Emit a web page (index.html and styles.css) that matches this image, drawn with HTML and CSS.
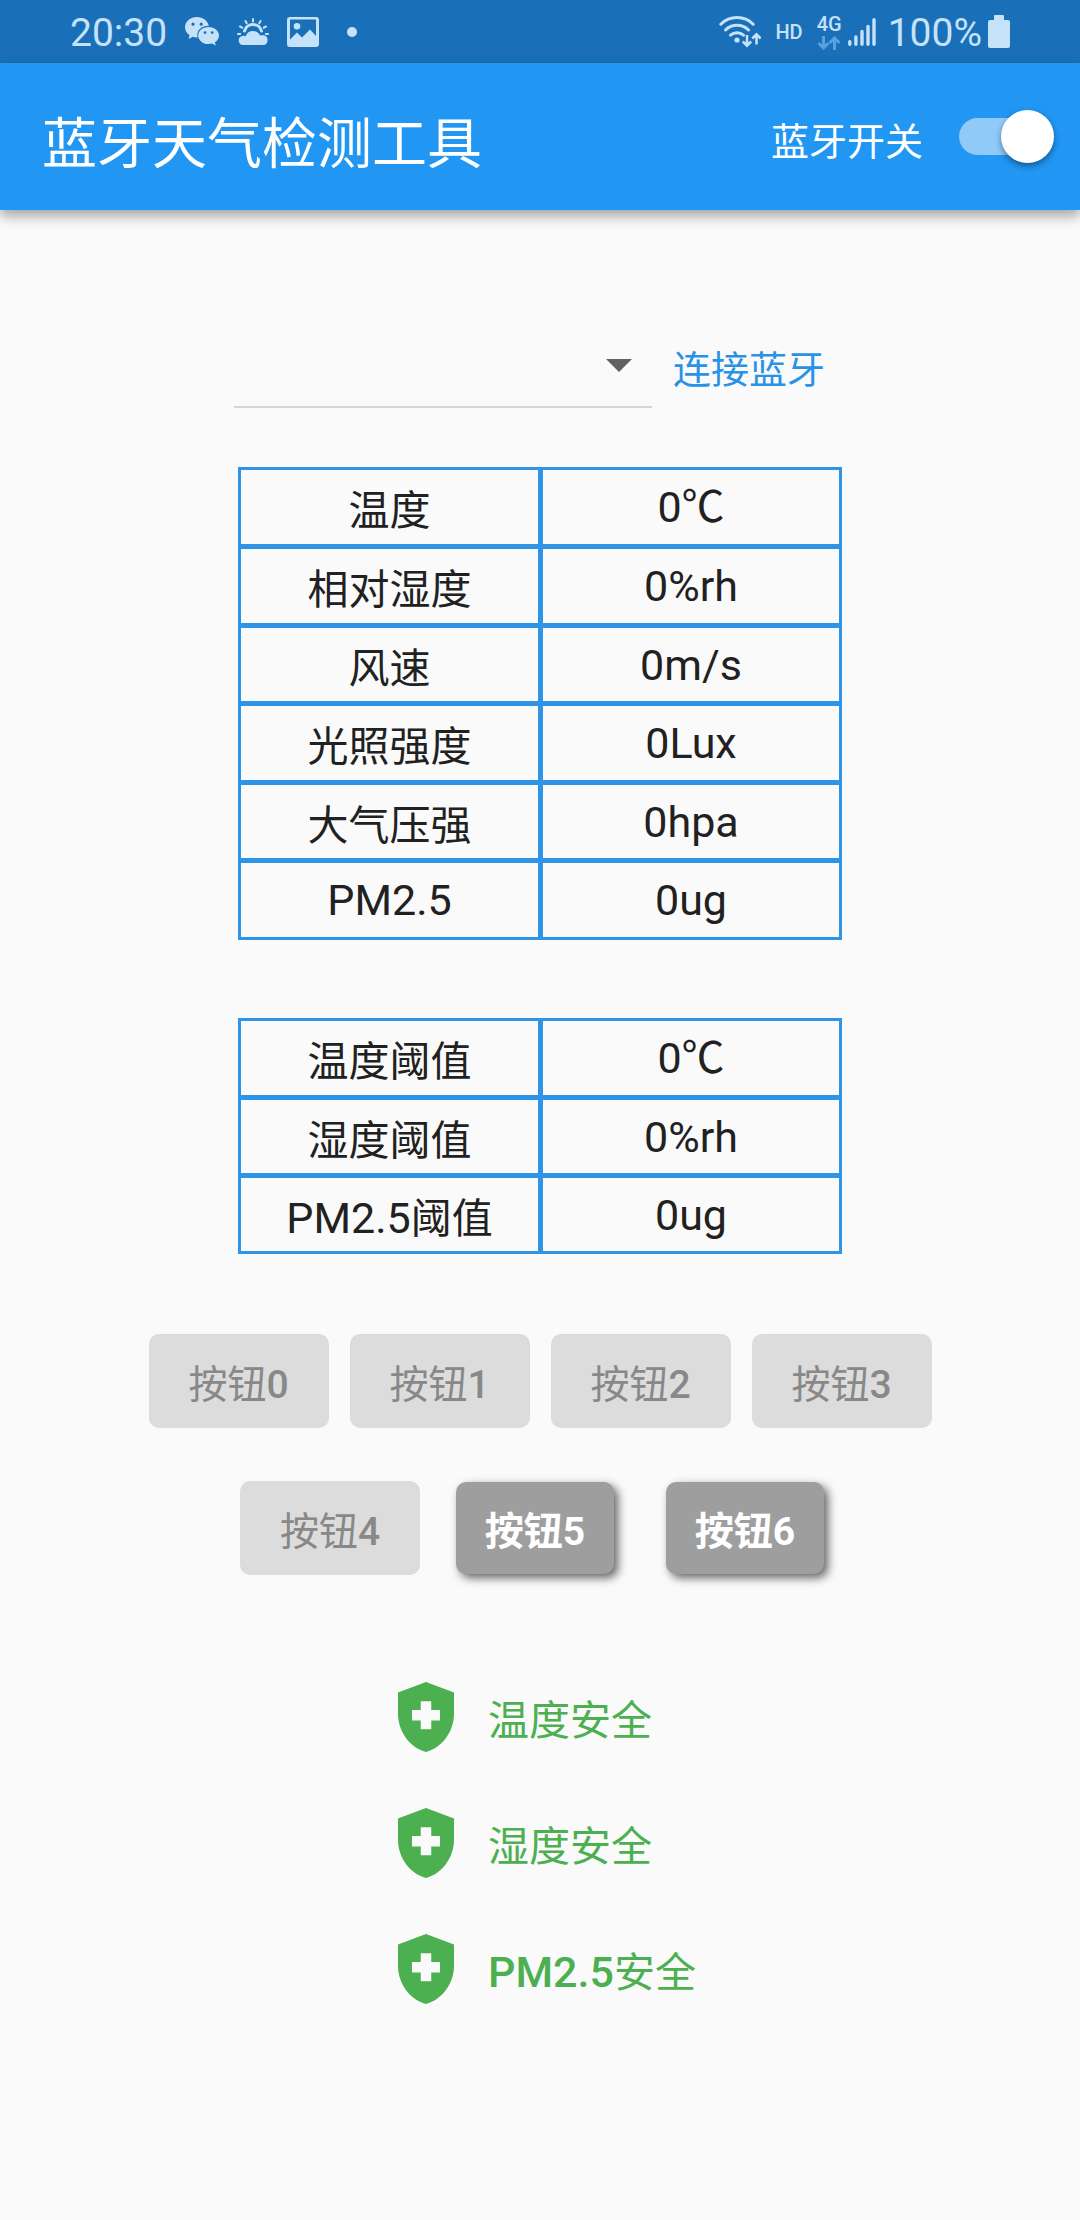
FILE: index.html
```html
<!DOCTYPE html>
<html lang="zh-CN">
<head>
<meta charset="utf-8">
<meta name="viewport" content="width=device-width, initial-scale=1">
<title>蓝牙天气检测工具</title>
<link rel="stylesheet" href="styles.css">
</head>
<body>
<div class="statusbar">
  <div class="status-left">
    <span class="status-text">20:30</span>
    <svg width="34" height="30" viewBox="0 0 34 30" aria-hidden="true">
      <path fill="currentColor" fill-rule="evenodd" d="M12 0C5.400 0 0 4.500 0 10.200c0 3.200 1.700 6 4.500 7.900L3.600 22l4.300-2.200c1.200.4 2.600.6 4.100.6h.6c-.2-.8-.3-1.500-.3-2.300 0-5.300 4.900-9.300 10.900-9.300h.6C22.700 3.900 17.900 0 12 0zM8 5.600a1.600 1.600 0 1 1 0 3.200 1.600 1.600 0 0 1 0-3.200zm8.200 0a1.600 1.600 0 1 1 0 3.200 1.600 1.600 0 0 1 0-3.200zM23.500 9.900c-5.800 0-10.300 3.700-10.300 8.600 0 4.800 4.500 8.600 10.300 8.600 1.300 0 2.500-.2 3.600-.5l3.700 2-.9-3.300c2.500-1.600 4.100-4 4.100-6.800 0-4.900-4.700-8.600-10.500-8.600zM20 14.200a1.400 1.400 0 1 1 0 2.800 1.400 1.400 0 0 1 0-2.800zm7.200 0a1.400 1.400 0 1 1 0 2.800 1.400 1.400 0 0 1 0-2.800z"/>
    </svg>
    <svg width="32" height="28" viewBox="0 0 32 28" aria-hidden="true">
      <g fill="none" stroke="currentColor" stroke-width="2" stroke-linecap="round">
        <path d="M16 1v2.500M8.500 3l1.200 2.200M23.500 3l-1.200 2.200M3 8.500l2.200 1.200M29 8.500l-2.200 1.200M1 16h2.200M31 16h-2.200"/>
        <path stroke-width="3" d="M7.500 13a8.800 8.800 0 0 1 17 0"/>
      </g>
      <path fill="currentColor" d="M6 27a4.600 4.600 0 0 1-.6-9.100c1.300-.2 2.400 0 3.300.4C9.800 14.700 12.400 13 16 13c3.400 0 5.800 1.700 7.100 4.600 1.100-.5 2.300-.6 3.500-.3A4.900 4.900 0 0 1 26 27z"/>
    </svg>
    <svg width="32" height="30" viewBox="0 0 32 30" aria-hidden="true">
      <path fill="currentColor" fill-rule="evenodd" d="M3 0h26a3 3 0 0 1 3 3v24a3 3 0 0 1-3 3H3a3 3 0 0 1-3-3V3a3 3 0 0 1 3-3zm0 2.400v20l7-7 5 5 8-8 6 6.500V2.400zM10 6a3.300 3.300 0 1 1 0 6.600A3.300 3.300 0 0 1 10 6z"/>
    </svg>
    <span class="more-dot"></span>
  </div>
  <div class="status-right">
    <svg width="42" height="34" viewBox="0 0 42 34" aria-hidden="true">
      <g fill="none" stroke="currentColor" stroke-width="3" stroke-linecap="round">
        <path d="M1.800 9.200a23 23 0 0 1 32.400 0"/>
        <path d="M6.500 15a16.500 16.500 0 0 1 23 0"/>
        <path d="M11.500 20.200a9.500 9.500 0 0 1 13 0"/>
      </g>
      <circle cx="18" cy="25" r="2.600" fill="currentColor"/>
      <g fill="none" stroke="currentColor" stroke-width="2.500">
        <path d="M28 20v10.500M23.800 26.500l4.200 4.200 4.200-4.200M37.500 29.500V19.500M33.300 23.500l4.200-4.200 4.200 4.200"/>
      </g>
    </svg>
    <span class="status-tag">HD</span>
    <span class="network">
      <span class="status-tag">4G</span>
      <svg class="traffic" width="24" height="14" viewBox="0 0 24 14" aria-hidden="true">
        <path fill="none" stroke="currentColor" stroke-width="3" d="M6.500 0v11.500M1.500 7l5 5 5-5M17.500 14V2.500M12.500 7l5-5 5 5"/>
      </svg>
    </span>
    <svg width="28" height="28" viewBox="0 0 28 28" aria-hidden="true">
      <path stroke="currentColor" stroke-width="3.400" stroke-linecap="round" d="M1.800 23.700v2.600M7.900 19v7.300M14 13.500v12.800M20 8.500v17.800M26 1.700v24.600"/>
    </svg>
    <span class="status-text battery-level">100%</span>
    <svg width="22" height="33" viewBox="0 0 22 33" aria-hidden="true">
      <path fill="currentColor" d="M7 0h8a1 1 0 0 1 1 1v4h4a2 2 0 0 1 2 2v24a2 2 0 0 1-2 2H2a2 2 0 0 1-2-2V7a2 2 0 0 1 2-2h4V1a1 1 0 0 1 1-1z"/>
    </svg>
  </div>
</div>

<header class="appbar">
  <h1 class="title">蓝牙天气检测工具</h1>
  <label class="switch-label" for="bt-switch">蓝牙开关</label>
  <input class="switch" type="checkbox" role="switch" id="bt-switch" checked>
</header>

<main class="content">
  <div class="connect">
    <div class="dropdown">
      <select class="device" aria-label="蓝牙设备"><option value=""></option></select>
    </div>
    <button class="connect-button" type="button">连接蓝牙</button>
  </div>

  <table class="readings">
    <tr><th scope="row">温度</th><td>0℃</td></tr>
    <tr><th scope="row">相对湿度</th><td>0%rh</td></tr>
    <tr><th scope="row">风速</th><td>0m/s</td></tr>
    <tr><th scope="row">光照强度</th><td>0Lux</td></tr>
    <tr><th scope="row">大气压强</th><td>0hpa</td></tr>
    <tr><th scope="row"><span class="latin">PM2.5</span></th><td>0ug</td></tr>
  </table>

  <table class="readings thresholds">
    <tr><th scope="row">温度阈值</th><td>0℃</td></tr>
    <tr><th scope="row">湿度阈值</th><td>0%rh</td></tr>
    <tr><th scope="row"><span class="latin">PM2.5</span>阈值</th><td>0ug</td></tr>
  </table>

  <div class="buttons">
    <button class="key" type="button" disabled>按钮<span class="medium">0</span></button>
    <button class="key" type="button" disabled>按钮<span class="medium">1</span></button>
    <button class="key" type="button" disabled>按钮<span class="medium">2</span></button>
    <button class="key" type="button" disabled>按钮<span class="medium">3</span></button>
  </div>
  <div class="buttons buttons-wide">
    <button class="key" type="button" disabled>按钮<span class="medium">4</span></button>
    <button class="key key-raised" type="button">按钮5</button>
    <button class="key key-raised" type="button">按钮6</button>
  </div>

  <ul class="alerts">
    <li class="alert">
      <svg width="84" height="84" viewBox="0 0 24 24" aria-hidden="true"><path fill="currentColor" fill-rule="evenodd" d="M12 2L4 5v6.090c0 5.050 3.410 9.760 8 10.910 4.590-1.150 8-5.860 8-10.910V5zM10.500 13H8v-3h2.500V7.500h3V10H16v3h-2.500v2.500h-3z"/></svg>
      <span>温度安全</span>
    </li>
    <li class="alert">
      <svg width="84" height="84" viewBox="0 0 24 24" aria-hidden="true"><path fill="currentColor" fill-rule="evenodd" d="M12 2L4 5v6.090c0 5.050 3.410 9.760 8 10.910 4.590-1.150 8-5.860 8-10.910V5zM10.500 13H8v-3h2.500V7.500h3V10H16v3h-2.500v2.500h-3z"/></svg>
      <span>湿度安全</span>
    </li>
    <li class="alert">
      <svg width="84" height="84" viewBox="0 0 24 24" aria-hidden="true"><path fill="currentColor" fill-rule="evenodd" d="M12 2L4 5v6.090c0 5.050 3.410 9.760 8 10.910 4.590-1.150 8-5.860 8-10.910V5zM10.500 13H8v-3h2.500V7.500h3V10H16v3h-2.500v2.500h-3z"/></svg>
      <span><span class="latin medium">PM2.5</span>安全</span>
    </li>
  </ul>
</main>
</body>
</html>
```
FILE: styles.css
```css
* {
  box-sizing: border-box;
}

body {
  margin: 0;
  min-height: 100vh;
  background: #fafafa;
  color: #212121;
  font-family: Roboto, "Noto Sans CJK SC", sans-serif;
  font-size: 41px;
}

button,
select {
  margin: 0;
  border: 0;
  font-family: inherit;
}

svg {
  display: block;
  flex: none;
}

.latin {
  font-size: 43px;
}

.medium {
  font-weight: 500;
}

/* System status bar */
.statusbar {
  display: flex;
  justify-content: space-between;
  height: 63px;
  padding: 0 70px;
  background: #1a70b8;
  color: #c5e2f8;
}

.status-left,
.status-right {
  display: flex;
  align-items: center;
}

.status-left {
  gap: 18px;
}

.status-right {
  gap: 6px;
}

.status-text {
  padding-top: 4px;
  font-size: 39px;
  line-height: 59px;
}

.battery-level {
  padding-left: 6px;
}

.status-tag {
  font-size: 20px;
  font-weight: 500;
  line-height: 20px;
}

.status-right > .status-tag {
  padding: 0 8px;
}

.more-dot {
  width: 10px;
  height: 10px;
  margin-left: 10px;
  border-radius: 50%;
  background: currentColor;
}

.network {
  display: grid;
  justify-items: center;
  gap: 2px;
}

.traffic {
  color: #5a9fde;
}

/* App bar */
.appbar {
  display: flex;
  align-items: center;
  height: 147px;
  padding: 0 26px 0 42px;
  background: #2196f3;
  box-shadow: 0 6px 12px rgba(0, 0, 0, 0.35);
  color: #fff;
}

.title {
  flex: 1;
  margin: 0;
  padding-top: 4px;
  font-size: 55px;
  font-weight: 400;
}

.switch-label {
  padding-top: 4px;
  font-size: 38px;
}

.switch {
  display: grid;
  align-items: center;
  appearance: none;
  width: 95px;
  height: 53px;
  margin: 0 0 0 36px;
}

.switch::before,
.switch::after {
  content: "";
  grid-area: 1 / 1;
}

.switch::before {
  width: 87px;
  height: 37px;
  border-radius: 19px;
  background: #90caf9;
}

.switch::after {
  justify-self: start;
  width: 53px;
  height: 53px;
  border-radius: 50%;
  background: #fff;
  box-shadow: 0 3px 6px rgba(0, 0, 0, 0.4);
}

.switch:checked::after {
  justify-self: end;
}

/* Page */
.content {
  display: flex;
  flex-direction: column;
  align-items: center;
  padding: 114px 42px 60px;
}

.connect {
  display: flex;
  align-items: center;
  margin-bottom: 59px;
}

.dropdown {
  position: relative;
}

.dropdown::after {
  content: "";
  position: absolute;
  top: 35px;
  right: 20px;
  width: 26px;
  height: 13px;
  background: #616161;
  clip-path: polygon(0 0, 100% 0, 50% 100%);
  pointer-events: none;
}

.device {
  display: block;
  appearance: none;
  width: 418px;
  height: 84px;
  border-bottom: 2px solid #d5d5d5;
  background: transparent;
  font-size: 38px;
}

.connect-button {
  padding: 0 21px;
  background: transparent;
  color: #2a92e4;
  font-size: 38px;
}

.readings {
  width: 604px;
  height: 473px;
  margin-bottom: 78px;
  border: 3px solid #2f94e5;
  border-spacing: 0;
  table-layout: fixed;
}

.thresholds {
  height: 236px;
  margin-bottom: 80px;
}

.readings th,
.readings td {
  height: 78px;
  padding: 0;
  font-weight: 400;
  text-align: center;
  vertical-align: middle;
}

.readings tr:first-child > * {
  height: 74px;
}

.readings th {
  width: 297px;
}

.readings td {
  border-left: 5px solid #2f94e5;
  font-size: 43px;
  line-height: 48px;
}

.readings tr + tr > * {
  border-top: 5px solid #2f94e5;
}

.buttons {
  display: flex;
  gap: 21px;
  margin-bottom: 53px;
}

.buttons-wide {
  align-items: center;
  gap: 36px;
  margin-bottom: 100px;
}

.key {
  width: 180px;
  height: 94px;
  padding: 0;
  border-radius: 10px;
  background: #dcdcdc;
  color: #888;
  font-size: 39px;
}

.key-raised {
  width: 158px;
  height: 92px;
  margin-right: 16px;
  background: #9e9e9e;
  box-shadow: 4px 4px 10px rgba(0, 0, 0, 0.6);
  color: #fff;
  font-weight: 700;
}

.alerts {
  display: grid;
  gap: 42px;
  margin: 0;
  padding: 0;
  list-style: none;
}

.alert {
  display: flex;
  align-items: center;
  gap: 20px;
  color: #4caf50;
}
```
